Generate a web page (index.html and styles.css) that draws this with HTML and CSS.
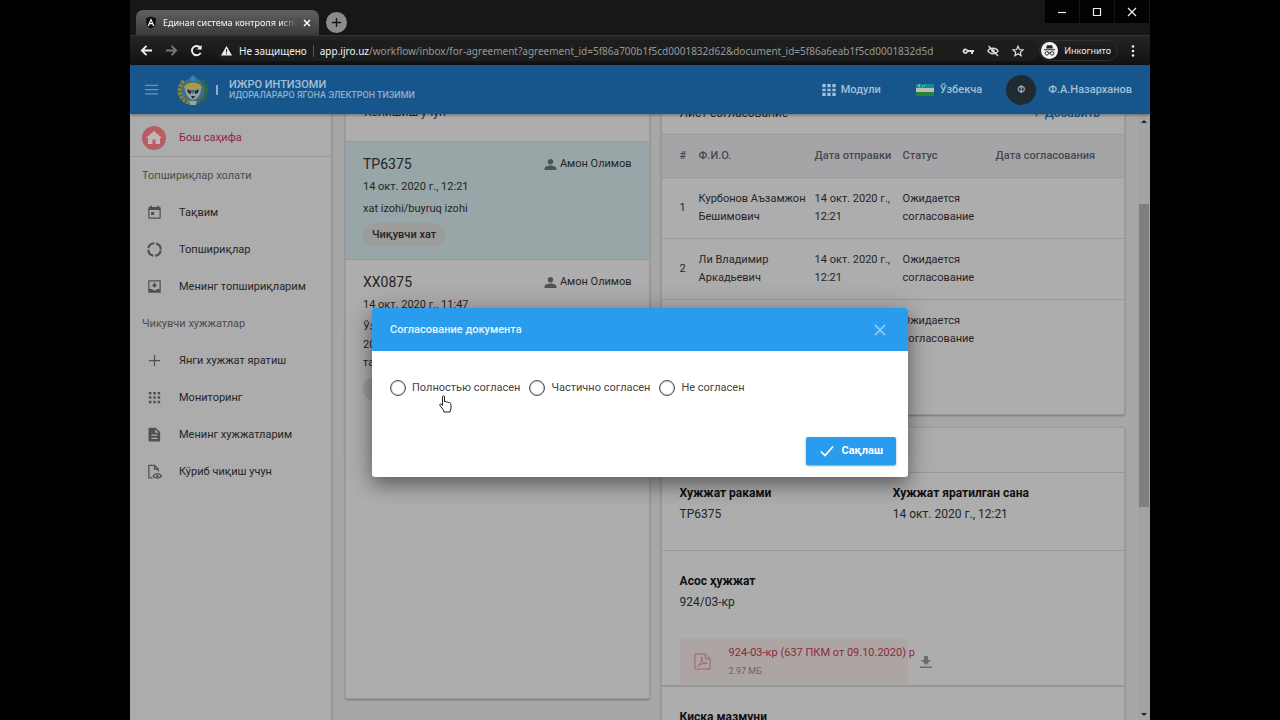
FILE: index.html
```
<!DOCTYPE html>
<html lang="uz">
<head>
<meta charset="utf-8">
<title>Единая система контроля исполнения</title>
<link rel="stylesheet" href="styles.css">
</head>
<body>
<svg class="sprite" aria-hidden="true">
  <symbol id="i-person" viewBox="0 0 24 24"><path d="M12 12a5 5 0 1 0 0-10 5 5 0 0 0 0 10zm0 2c-4 0-11 2-11 5.500V22h22v-2.500C23 16 16 14 12 14z"/></symbol>
  <symbol id="i-apps" viewBox="0 0 24 24"><path d="M2 3h5v5H2zM9.500 3h5v5h-5zM17 3h5v5h-5zM2 10h5v4H2zM9.500 10h5v4h-5zM17 10h5v4h-5zM2 16h5v5H2zM9.500 16h5v5h-5zM17 16h5v5h-5z"/></symbol>
  <symbol id="i-dots" viewBox="0 0 24 24"><path d="M3 3h4v4H3zM10 3h4v4h-4zM17 3h4v4h-4zM3 10h4v4H3zM10 10h4v4h-4zM17 10h4v4h-4zM3 17h4v4H3zM10 17h4v4h-4zM17 17h4v4h-4z"/></symbol>
</svg>
<div class="browser">
  <div class="tabstrip">
    <div class="tab">
      <svg class="tab-logo" viewBox="0 0 14 14"><path fill="#101012" d="M7 0l6 2-1 9-5 3-5-3L1 2z"/><path fill="#fff" fill-rule="evenodd" d="M7 2l4 9H9.400L8.600 9H5.400l-.8 2H3zM7 5L6 7.700h2z"/></svg>
      <span class="tab-title">Единая система контроля испо</span>
      <button class="tab-close" aria-label="Закрыть вкладку"><svg viewBox="0 0 10 10"><path d="M2 2l6 6M8 2l-6 6"/></svg></button>
    </div>
    <button class="tab-new" aria-label="Новая вкладка"><svg viewBox="0 0 12 12"><path d="M6 1v10M1 6h10"/></svg></button>
    <div class="window-buttons">
      <button aria-label="Свернуть"><svg viewBox="0 0 12 12"><path d="M2 6.500h8"/></svg></button>
      <button aria-label="Развернуть"><svg viewBox="0 0 12 12"><path d="M2.500 2.500h7v7h-7z"/></svg></button>
      <button aria-label="Закрыть"><svg viewBox="0 0 12 12"><path d="M2 2l8 8M10 2l-8 8"/></svg></button>
    </div>
  </div>
  <div class="toolbar">
    <button class="nav" aria-label="Назад"><svg viewBox="0 0 14 14"><path d="M13 7H2M7 2L2 7l5 5"/></svg></button>
    <button class="nav off" aria-label="Вперёд"><svg viewBox="0 0 14 14"><path d="M1 7h11M7 2l5 5-5 5"/></svg></button>
    <button class="nav" aria-label="Обновить"><svg viewBox="0 0 14 14"><path d="M11.500 9.500A5 5 0 1 1 11 4"/><path d="M12.500 1v5h-5z" fill="#f1f1f1" stroke="none"/></svg></button>
    <div class="address">
      <svg class="warn" viewBox="0 0 12 12"><path fill="#eee" fill-rule="evenodd" d="M6 1l6 10.500H0zM5.400 4.500v3.500h1.200V4.500zM5.400 9v1.200h1.200V9z"/></svg>
      <span class="insecure">Не защищено</span>
      <span class="url"><b>app.ijro.uz</b>/workflow/inbox/for-agreement?agreement_id=5f86a700b1f5cd0001832d62&amp;document_id=5f86a6eab1f5cd0001832d5d</span>
      <svg class="addr-icon" viewBox="0 0 12 12"><path fill="#ddd" fill-rule="evenodd" d="M3.500 3.500a2.700 2.700 0 0 1 2.400 1.500H12v2h-1v2H9V7H5.900a2.700 2.700 0 1 1-2.400-3.500zm0 1.700a1 1 0 1 0 0 2 1 1 0 0 0 0-2z"/></svg>
      <svg class="addr-icon" viewBox="0 0 12 12"><path fill="none" stroke="#ddd" stroke-width="1.300" d="M.8 6C3 2.300 9 2.300 11.200 6 9 9.700 3 9.700.8 6zM1.500 1l9.500 10"/><circle cx="6" cy="6" r="1.800" fill="#ddd"/></svg>
      <svg class="addr-icon" viewBox="0 0 12 12"><path fill="none" stroke="#ddd" stroke-width="1.200" d="M6 1.200l1.400 3.300 3.600.3-2.700 2.400.8 3.500L6 8.800l-3.100 1.900.8-3.500L1 4.800l3.600-.3z"/></svg>
    </div>
    <div class="incognito">
      <svg viewBox="0 0 18 18"><circle cx="9" cy="9" r="9" fill="#f4f4f4"/><path fill="#222" d="M6.300 3.500h5.400l1 3.500H5.300zM3 7.800h12v1H3z"/><g fill="none" stroke="#222"><circle cx="6.200" cy="12" r="1.900"/><circle cx="11.800" cy="12" r="1.900"/><path d="M8 11.500h2"/></g></svg>
      <span>Инкогнито</span>
    </div>
    <button class="menu" aria-label="Меню"><svg viewBox="0 0 4 14"><circle cx="2" cy="2.500" r="1.300"/><circle cx="2" cy="7" r="1.300"/><circle cx="2" cy="11.500" r="1.300"/></svg></button>
  </div>

  <div class="page">
    <header class="appbar">
      <button class="burger" aria-label="Меню"><svg viewBox="0 0 16 12"><path d="M1 1.500h14M1 6h14M1 10.500h14"/></svg></button>
      <svg class="emblem" viewBox="0 0 32 32">
        <circle cx="16" cy="16.500" r="12.500" fill="#3d6f80"/>
        <path fill="none" stroke="#2c6b4a" stroke-width="4" stroke-dasharray="3 1" d="M16 29A12.500 12.500 0 0 0 25 7"/>
        <path fill="none" stroke="#7f8444" stroke-width="4" stroke-dasharray="3 1" d="M16 29A12.500 12.500 0 0 1 7 7"/>
        <path fill="#aa9a45" d="M7 14C8 7 24 7 25 14l-4 2H11z"/>
        <path fill="#8f9ea0" d="M8 14l4 1 4 5 4-5 4-1c0 6-3 11-8 12-5-1-8-6-8-12z"/>
        <path fill="#252b2d" d="M10 15l4 2v3l-3-1zM22 15l-4 2v3l3-1zM14 22h4l-2 3z"/>
        <path fill="#3a86a8" d="M16 1l3 3-1 3h-4l-1-3z"/><path fill="#94a5a6" d="M12 27h8l-1 4h-6z"/>
        <path fill="#8a4c48" d="M8 24l3 3-2 1zM24 24l-3 3 2 1z"/>
      </svg>
      <div class="brand"><strong>ИЖРО ИНТИЗОМИ</strong><span>ИДОРАЛАРАРО ЯГОНА ЭЛЕКТРОН ТИЗИМИ</span></div>
      <button class="modules"><svg viewBox="0 0 24 24"><use href="#i-apps"/></svg>Модули</button>
      <button class="lang"><svg viewBox="0 0 18 14"><path fill="#168b9b" d="M0 1h18v4H0z"/><path fill="#b8bfb4" d="M0 5h18v4H0z"/><path fill="#24823a" d="M0 9h18v4H0z"/><path fill="none" stroke="#b8d5d0" d="M4 1.500a1.200 1.200 0 1 0 0 2.500M6 3.500h1M8 2.500h1"/></svg>Ўзбекча</button>
      <button class="user"><span class="avatar">Ф</span>Ф.А.Назарханов</button>
    </header>

    <div class="body">
      <nav class="sidebar">
        <a class="home" href="#"><svg viewBox="0 0 24 24"><circle cx="12" cy="12" r="12" fill="#b95d65"/><path fill="#c6b5b5" d="M12 5l8 7h-2v6h-4.500v-4.500h-3V18H6v-6H4z"/></svg>Бош саҳифа</a>
        <h2>Топшириқлар холати</h2>
        <a href="#"><svg viewBox="0 0 24 24"><path fill-rule="evenodd" d="M5 1h3v2h8V1h3v2h1a2 2 0 0 1 2 2v15a2 2 0 0 1-2 2H4a2 2 0 0 1-2-2V5a2 2 0 0 1 2-2h1zM4 8v12h16V8zM6.500 11h5v5h-5z"/></svg>Тақвим</a>
        <a href="#"><svg viewBox="0 0 24 24"><circle cx="12" cy="12" r="10" fill="none" stroke="#505050" stroke-width="3.500" stroke-dasharray="12.700 3" stroke-dashoffset="-1.500"/></svg>Топшириқлар</a>
        <a href="#"><svg viewBox="0 0 24 24"><path fill-rule="evenodd" d="M3 2h18a1 1 0 0 1 1 1v18a1 1 0 0 1-1 1H3a1 1 0 0 1-1-1V3a1 1 0 0 1 1-1zm1 2v12h4l2 2h4l2-2h4V4zM10.500 6h3v3H17l-5 5-5-5h3.500z"/></svg>Менинг топшириқларим</a>
        <h2>Чикувчи хужжатлар</h2>
        <a href="#"><svg viewBox="0 0 24 24"><path d="M11 3h2v8h8v2h-8v8h-2v-8H3v-2h8z"/></svg>Янги хужжат яратиш</a>
        <a href="#"><svg viewBox="0 0 24 24"><use href="#i-dots"/></svg>Мониторинг</a>
        <a href="#"><svg viewBox="0 0 24 24"><path fill-rule="evenodd" d="M4 1h10l7 7v15H4a1.500 1.500 0 0 1-1.500-1.500v-19A1.500 1.500 0 0 1 4 1zm9 2.500V9h5.500zM7 12v2h10v-2zM7 17v2h10v-2z"/></svg>Менинг хужжатларим</a>
        <a href="#"><svg viewBox="0 0 24 24"><path fill="none" stroke="#505050" stroke-width="2" d="M9 22H3V2h9l6 6v4M12 2v6h6"/><path fill="none" stroke="#505050" stroke-width="2" d="M10 19c2.500-5 10.500-5 13 0-2.500 5-10.500 5-13 0z"/><circle cx="16.500" cy="19" r="2"/></svg>Кўриб чиқиш учун</a>
      </nav>

      <main class="content">
        <section class="card inbox">
          <h2 class="card-title">Келишиш учун</h2>
          <article class="letter active">
            <div class="letter-top"><h3>TP6375</h3><span class="author"><svg viewBox="0 0 24 24"><use href="#i-person"/></svg>Амон Олимов</span></div>
            <p>14 окт. 2020 г., 12:21</p>
            <p class="desc">xat izohi/buyruq izohi</p>
            <span class="chip">Чиқувчи хат</span>
          </article>
          <article class="letter">
            <div class="letter-top"><h3>XX0875</h3><span class="author"><svg viewBox="0 0 24 24"><use href="#i-person"/></svg>Амон Олимов</span></div>
            <p>14 окт. 2020 г., 11:47</p>
            <p class="desc">Ўз<br>20<br>та</p>
            <span class="chip"></span>
          </article>
        </section>

        <div class="details">
          <section class="card approvals">
            <div class="card-title"><h2>Лист согласование</h2><button class="add"><span>+</span>Добавить</button></div>
            <table>
              <colgroup><col class="c-num"><col class="c-name"><col class="c-date"><col class="c-status"><col></colgroup>
              <thead><tr><th>#</th><th>Ф.И.О.</th><th>Дата отправки</th><th>Статус</th><th>Дата согласования</th></tr></thead>
              <tbody>
                <tr><td>1</td><td>Курбонов Аъзамжон<br>Бешимович</td><td>14 окт. 2020 г.,<br>12:21</td><td>Ожидается<br>согласование</td><td></td></tr>
                <tr><td>2</td><td>Ли Владимир<br>Аркадьевич</td><td>14 окт. 2020 г.,<br>12:21</td><td>Ожидается<br>согласование</td><td></td></tr>
                <tr><td></td><td></td><td></td><td>Ожидается<br>согласование</td><td></td></tr>
              </tbody>
            </table>
          </section>
          <section class="card document">
            <div class="doc-head"></div>
            <div class="doc-row pair">
              <div><h4>Хужжат раками</h4><p>TP6375</p></div>
              <div><h4>Хужжат яратилган сана</h4><p>14 окт. 2020 г., 12:21</p></div>
            </div>
            <div class="doc-row base">
              <h4>Асос ҳужжат</h4><p>924/03-кр</p>
              <div class="file">
                <a class="file-box" href="#">
                  <svg viewBox="0 0 18 18"><path d="M1 1h11l5 5v11H1zM12 1v5h5M4 14c3-2 5-7 4-10 0 4 2 7 6 7-4-.5-7 .5-10 3z"/></svg>
                  <span><b>924-03-кр (637 ПКМ от 09.10.2020) p</b><small>2.97 МБ</small></span>
                </a>
                <button class="download" aria-label="Скачать"><svg viewBox="0 0 12 12"><path d="M4 0h4v4h3L6 9 1 4h3zM0 10.500h12V12H0z"/></svg></button>
              </div>
            </div>
            <div class="doc-row"><h4>Киска мазмуни</h4></div>
          </section>
        </div>
      </main>
      <div class="scrollbar"><i class="up"></i><div class="thumb"></div><i class="down"></i></div>
    </div>

    <div class="overlay">
      <form class="dialog" role="dialog" aria-labelledby="dlg-title">
        <div class="dialog-head"><h2 id="dlg-title">Согласование документа</h2><button type="button" aria-label="Закрыть"><svg viewBox="0 0 12 12"><path d="M1 1l10 10M11 1L1 11"/></svg></button></div>
        <div class="options">
          <label><input type="radio" name="agree">Полностью согласен</label>
          <label><input type="radio" name="agree">Частично согласен</label>
          <label><input type="radio" name="agree">Не согласен</label>
        </div>
        <div class="actions"><button type="button" class="save"><svg viewBox="0 0 14 12"><path d="M1 6.500L5 10.500 13 1.500"/></svg>Сақлаш</button></div>
        <svg class="pointer" viewBox="0 0 13 18"><path fill="#fff" stroke="#222" d="M3.500 10.500V1.800c0-1.400 2-1.400 2 0V7c.5-1 2-.7 2 .3.500-.8 2-.5 2 .5.600-.7 2-.4 2 .7l.5 1.500v3L11 17H5l-1-2.500L1 10.500c-.8-1.200.5-2.200 1.500-1.200z"/></svg>
      </form>
    </div>
  </div>
</div>
</body>
</html>
```
FILE: styles.css
```
* { box-sizing: border-box; }
body {
  margin: 0;
  height: 100vh;
  padding: 0 130px;
  background: #000;
  overflow: hidden;
  font: 11px/18px Roboto, "Open Sans", sans-serif;
  color: #252525;
}
h2, h3, h4, p { margin: 0; font-size: inherit; font-weight: 400; }
button { margin: 0; padding: 0; border: 0; background: none; font: inherit; color: inherit; display: flex; align-items: center; }
a { color: inherit; text-decoration: none; }
svg { display: block; flex: none; }
.sprite { position: absolute; width: 0; height: 0; }

.browser { height: 100%; display: flex; flex-direction: column; background: #171717; }

.tabstrip { display: flex; align-items: flex-end; height: 35px; padding-left: 6px; background: #171717; font-family: "Noto Sans", sans-serif; }
.tab { display: flex; align-items: center; gap: 6px; width: 183px; height: 25px; padding: 0 7px 0 9px; border-radius: 7px 7px 0 0; background: linear-gradient(#616161, #3a3a3a); color: #f8f8f8; }
.tab-logo { width: 12px; height: 13px; }
.tab-title { flex: 1; overflow: hidden; white-space: nowrap; font-size: 9px; -webkit-mask-image: linear-gradient(90deg, #000 88%, transparent); mask-image: linear-gradient(90deg, #000 88%, transparent); }
.tab-close svg { width: 10px; fill: none; stroke: #fff; stroke-width: 1.5; }
.tab-new { justify-content: center; width: 21px; height: 21px; margin: 0 0 2px 7px; border-radius: 50%; background: #8c8c8c; }
.tab-new svg { width: 11px; fill: none; stroke: #171717; stroke-width: 1.5; }
.window-buttons { display: flex; gap: 1px; margin-left: auto; padding-right: 1px; align-self: flex-start; }
.window-buttons button { justify-content: center; width: 34px; height: 23px; background: #030303; }
.window-buttons svg { width: 12px; fill: none; stroke: #eee; stroke-width: 1.2; }

.toolbar { display: flex; align-items: center; height: 30px; padding: 0 15px 0 10px; border-top: 1px solid #343434; background: linear-gradient(#242424, #111); color: #ececec; font-family: "Noto Sans", sans-serif; font-size: 10px; }
.nav { width: 13px; margin-right: 12px; }
.nav svg { width: 13px; fill: none; stroke: #f1f1f1; stroke-width: 2; }
.nav.off svg { stroke: #777; }
.address { flex: 1; display: flex; align-items: center; min-width: 0; height: 21px; padding: 0 15px 0 6px; border-radius: 11px; background: #1c1e1d; }
.warn { width: 11px; }
.insecure { margin: 0 6px 0 7px; padding-right: 6px; border-right: 1px solid #555; line-height: 12px; white-space: nowrap; }
.url { flex: 1; overflow: hidden; white-space: nowrap; color: #989898; }
.url b { font-weight: 400; color: #f4f4f4; }
.addr-icon { width: 12px; margin-left: 13px; }
.incognito { display: flex; align-items: center; gap: 6px; height: 21px; padding: 0 6px 0 1px; border: 1px solid #303030; border-radius: 11px; font-size: 9px; }
.incognito svg { width: 17px; }
.menu { margin-left: 13px; }
.menu svg { width: 4px; fill: #eee; }

.page { flex: 1; min-height: 0; display: flex; flex-direction: column; position: relative; background: #a7a7a7; }
.appbar { position: relative; z-index: 1; display: flex; align-items: center; flex: none; height: 49px; padding: 0 18px 0 14px; background: #17568d; color: #a6bfd4; font-weight: 500; box-shadow: 0 1px 3px rgba(0, 0, 0, .4); }
.burger svg { width: 15px; fill: none; stroke: #7094b4; stroke-width: 1.5; }
.emblem { width: 32px; height: 32px; margin-left: 18px; }
.brand { display: flex; flex-direction: column; margin-left: 6px; padding-left: 14px; position: relative; line-height: 11px; font-size: 9px; color: #8eafca; }
.brand::before { content: ""; position: absolute; left: 1px; top: 6px; width: 2px; height: 10px; background: #8eafca; }
.brand strong { font-size: 11px; font-weight: 500; color: #a6bfd4; }
.modules { margin-left: auto; gap: 4px; }
.modules svg { width: 16px; fill: #a6bfd4; }
.lang { margin-left: 35px; gap: 6px; }
.lang svg { width: 18px; }
.user { margin-left: 24px; gap: 12px; }
.avatar { width: 30px; height: 30px; border-radius: 50%; background: #202b31; line-height: 30px; font-size: 10px; color: #aaa; }

.body { flex: 1; min-height: 0; display: flex; }
.sidebar { flex: none; width: 203px; border-right: 2px solid #989898; background: #acacac; }
.sidebar h2 { padding-left: 12px; line-height: 37px; color: #4c4c4c; }
.sidebar a { display: flex; align-items: center; gap: 17px; height: 37px; padding-left: 17px; }
.sidebar a svg { width: 15px; fill: #505050; }
.sidebar .home { gap: 13px; height: 43px; padding: 6px 0 0 12px; border-bottom: 1px solid #999; color: #90233f; }
.sidebar .home svg { width: 24px; }

.content { flex: 1; min-width: 0; display: grid; grid-template-columns: 305fr 465fr; align-items: start; gap: 11px; margin-top: -24px; padding: 0 13px 0 12px; }
.card { background: #adadad; border: 1px solid #9b9b9b; border-radius: 2px; box-shadow: 0 1px 2px rgba(0, 0, 0, .3); }
.inbox { min-width: 0; height: calc(100vh - 111px); }
.inbox .card-title { height: 50px; padding: 12px 18px 0; font-size: 12px; }
.letter { padding: 13px 17px 12px; border-top: 1px solid #909b9b; }
.letter.active { background: #98a6a7; }
.letter-top { display: flex; justify-content: space-between; align-items: center; margin-bottom: 5px; }
.letter h3 { font-size: 14px; }
.author { display: flex; align-items: center; gap: 3px; }
.author svg { width: 13px; fill: #4f5353; }
.desc { margin-top: 4px; }
.chip { display: inline-block; min-width: 81px; height: 24px; margin-top: 5px; padding: 0 9px; border-radius: 12px; line-height: 24px; background: #9c9c9c; font-weight: 500; vertical-align: top; }

.details { min-width: 0; }
.approvals { height: 325px; }
.approvals .card-title { display: flex; justify-content: space-between; align-items: center; height: 43px; padding: 0 24px 0 18px; font-size: 12px; }
.add { gap: 5px; font-weight: 500; color: #17568d; }
table { width: 100%; border-collapse: collapse; table-layout: fixed; }
.c-num { width: 37px; }
.c-name { width: 116px; }
.c-date { width: 88px; }
.c-status { width: 93px; }
th, td { padding: 0; border-top: 1px solid #9a9a9a; text-align: left; white-space: nowrap; }
th { height: 43px; background: #a5a5a8; font-weight: 500; color: #48484c; }
td { height: 61px; }
th:first-child, td:first-child { padding-left: 18px; }

.document { margin-top: 12px; }
.doc-head { height: 44px; }
.doc-row { padding: 10px 18px; border-top: 1px solid #999; font-size: 12px; line-height: 21px; }
.doc-row h4 { font-weight: 700; color: #111; }
.pair { display: grid; grid-template-columns: 1fr 1fr; height: 78px; }
.base, .base ~ .doc-row { padding-top: 20px; }
.base { height: 135px; padding-bottom: 0; }
.base ~ .doc-row { border-top: 2px solid #969694; }
.file { display: flex; align-items: center; gap: 12px; margin-top: 26px; }
.file-box { display: flex; align-items: center; gap: 18px; width: 228px; height: 45px; padding-left: 14px; background: #ada5a3; }
.file-box svg { width: 17px; fill: none; stroke: #a65c68; }
.file-box span { display: flex; flex-direction: column; line-height: 19px; white-space: nowrap; }
.file-box b { font-size: 11px; font-weight: 400; color: #8f2741; }
.file-box small { font-size: 9px; color: #666; }
.download svg { width: 12px; fill: #6d6d6d; }

.scrollbar { flex: none; display: flex; flex-direction: column; align-items: center; width: 12px; background: #a3a3a3; }
.scrollbar i { border: 3px solid transparent; }
.scrollbar .up { margin-top: 3px; border-bottom-color: #222; }
.scrollbar .down { margin: auto 0 1px; border-top-color: #222; }
.thumb { width: 10px; height: 50%; margin-top: 81px; background: #7f7f7f; }

.overlay { position: absolute; inset: 0; z-index: 2; display: flex; align-items: center; justify-content: center; }
.dialog { position: relative; width: 536px; border-radius: 3px; background: #fff; box-shadow: 0 8px 18px rgba(0, 0, 0, .35), 0 2px 30px rgba(0, 0, 0, .2); color: #444; }
.dialog-head { display: flex; justify-content: space-between; align-items: center; height: 43px; padding: 0 22px 0 18px; border-radius: 3px 3px 0 0; background: #2a9cee; color: #e6f6ff; }
.dialog-head h2 { font-weight: 500; }
.dialog-head svg { width: 12px; fill: none; stroke: #9cd2f8; stroke-width: 1.5; }
.options { display: flex; gap: 9px; padding: 28px 18px 40px; }
.options label { display: flex; align-items: center; gap: 6px; }
.options input { appearance: none; width: 16px; height: 16px; margin: 0; border: 1px solid #4c4c4c; border-radius: 50%; outline: 1px solid rgba(76, 76, 76, .3); outline-offset: -2px; }
.actions { display: flex; justify-content: flex-end; padding: 0 12px 12px; }
.save { gap: 8px; height: 28px; padding: 0 13px 0 14px; border-radius: 2px; background: #2a9cee; color: #fff; font-weight: 700; box-shadow: 0 1px 2px rgba(0, 0, 0, .4); }
.save svg { width: 14px; fill: none; stroke: #fff; stroke-width: 1.7; }
.pointer { position: absolute; left: 67px; top: 87px; width: 13px; height: 18px; }
```
